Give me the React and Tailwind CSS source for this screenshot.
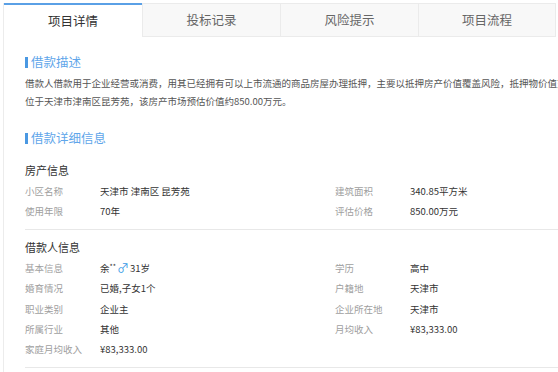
const tabs = ['项目详情', '投标记录', '风险提示', '项目流程'];

const houseRows = [
  ['小区名称', '天津市 津南区 昆芳苑', '建筑面积', '340.85平方米'],
  ['使用年限', '70年', '评估价格', '850.00万元'],
];

const personRows = [
  ['婚育情况', '已婚,子女1个', '户籍地', '天津市'],
  ['职业类别', '企业主', '企业所在地', '天津市'],
  ['所属行业', '其他', '月均收入', '¥83,333.00'],
  ['家庭月均收入', '¥83,333.00'],
];

function SectionTitle({ children, className }) {
  return (
    <div className={'flex items-center leading-[16px] ' + className}>
      <span className="w-[3px] h-[11px] bg-[#4a98e2] mr-[3px]" />
      <span className="text-[12.5px] text-[#5fa6ea]">{children}</span>
    </div>
  );
}

function Cell({ label, value }) {
  return (
    <div className="flex">
      <span className="w-[75px] shrink-0 text-[#a0a0a0]">{label}</span>
      <span className="text-[#333]">{value}</span>
    </div>
  );
}

function Rows({ rows }) {
  return rows.map((r, i) => (
    <div key={i} className="grid grid-cols-[310px_1fr]">
      <Cell label={r[0]} value={r[1]} />
      {r[2] ? <Cell label={r[2]} value={r[3]} /> : <div />}
    </div>
  ));
}

export default function App() {
  return (
    <div
      className="w-[558px] h-[372px] overflow-hidden bg-white pt-[3px] pl-[3px]"
      style={{ fontFamily: '"Noto Sans CJK SC", "Liberation Sans", sans-serif' }}
    >
      <div className="w-[760px] h-[400px] border-l border-[#ececec]">
        <div className="flex w-[552px] h-[34px]">
          {tabs.map((t, i) =>
            i === 0 ? (
              <div
                key={t}
                className="w-[138px] flex items-center justify-center border-t-2 border-[#5aa0e6] text-[12.5px] text-[#333] bg-white"
              >
                {t}
              </div>
            ) : (
              <div
                key={t}
                className={
                  'w-[138px] flex items-center justify-center border-t border-b border-l border-[#ebebeb] bg-[#f8f8f8] text-[12.5px] text-[#666]' +
                  (i === 3 ? ' border-r' : '')
                }
              >
                {t}
              </div>
            )
          )}
        </div>

        <div className="pl-[21px]">
          <SectionTitle className="mt-[17px]">借款描述</SectionTitle>
          <div className="mt-[4px] text-[9.5px] leading-[18px] text-[#555] whitespace-nowrap">
            <div>借款人借款用于企业经营或消费，用其已经拥有可以上市流通的商品房屋办理抵押，主要以抵押房产价值覆盖风险，抵押物价值充足，抵押物</div>
            <div>位于天津市津南区昆芳苑，该房产市场预估价值约850.00万元。</div>
          </div>

          <SectionTitle className="mt-[20px]">借款详细信息</SectionTitle>

          <div className="mt-[16px] text-[11px] leading-[16px] text-[#333]">房产信息</div>
          <div className="mt-[3px] text-[9.5px] leading-[20px]">
            <Rows rows={houseRows} />
          </div>
          <div className="mt-[8px] h-px bg-[#e8e8e8]" />

          <div className="mt-[9px] text-[11px] leading-[16px] text-[#333]">借款人信息</div>
          <div className="mt-[3px] text-[9.5px] leading-[20.3px]">
            <div className="grid grid-cols-[310px_1fr]">
              <div className="flex">
                <span className="w-[75px] shrink-0 text-[#a0a0a0]">基本信息</span>
                <span className="text-[#333] flex items-center">
                  余<span className="text-[7px] relative -top-[2px]">**</span>
                  <span className="text-[#3a9be6] text-[12px] leading-[12px] mx-[1px]">♂</span>
                  31岁
                </span>
              </div>
              <Cell label="学历" value="高中" />
            </div>
            <Rows rows={personRows} />
          </div>
          <div className="mt-[8px] h-px bg-[#e8e8e8]" />
        </div>
      </div>
    </div>
  );
}
